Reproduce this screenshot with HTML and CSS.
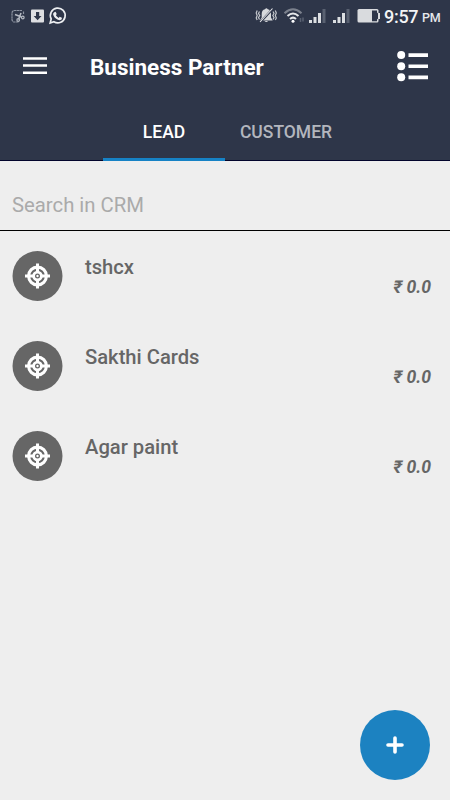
FILE: index.html
```
<!DOCTYPE html>
<html lang="en">
<head>
<meta charset="utf-8">
<title>Business Partner</title>
<link rel="stylesheet" href="styles.css">
</head>
<body>
<svg class="symbols" aria-hidden="true">
  <symbol id="target" viewBox="0 0 26 26">
    <circle cx="13" cy="13" r="8.900" fill="none" stroke="#fff" stroke-width="3.100"/>
    <path d="M13 .5v9M13 16.500v9M.5 13h9M16.500 13h9" stroke="#fff" stroke-width="3"/>
    <circle cx="13" cy="13" r="3.900" fill="none" stroke="#fff" stroke-width="2.800"/>
    <circle cx="13" cy="13" r="1.200" fill="#fff"/>
  </symbol>
</svg>
<header class="header">
  <div class="status">
    <svg class="status-left" width="80" height="32" viewBox="0 0 80 32">
      <path d="M22 10.500h-7.500a2.500 2.500 0 0 0-2.500 2.500v6.500a2.500 2.500 0 0 0 2.500 2.500h4M23.500 11.500v3" fill="none" stroke="#8d94a1" stroke-width="1.200" stroke-dasharray="2.500 .4"/>
      <path d="M15 14.500l6.500 2.500M21 13l-2.500 6.500" stroke="#b5bac3" stroke-width="1.600"/>
      <circle cx="22.800" cy="17.500" r="1.300" fill="none" stroke="#b5bac3" stroke-width="1.200"/>
      <circle cx="18.200" cy="20" r="1.300" fill="none" stroke="#b5bac3" stroke-width="1.200"/>
      <rect x="31" y="9.500" width="13" height="13" rx="1" fill="#dedfe2"/>
      <path d="M36 12h3.200v4h2.300l-3.900 4.200-3.900-4.200H36z" fill="#2e3649"/>
      <path d="M50.200 23l1-4.100a7.400 7.400 0 1 1 2.700 2.900z" fill="none" stroke="#eceef1" stroke-width="1.700"/>
      <path d="M54.300 12.200l1.300-.4 1.100 2.300-.8 1.200c.7 1.300 1.500 2 2.800 2.600l1-1.100 2.200 1-.1 1.200c-.7 1.300-2.300 1.400-3.900.7-2.300-1-4.100-3-4.700-5-.2-1 .2-2 1.100-2.500z" fill="#eceef1"/>
    </svg>
    <svg class="status-right" width="130" height="32" viewBox="250 0 130 32">
      <path d="M260 20.500l1.700-3v-3.500q0-4 3.300-4.800q1.400-1.800 2.800 0q3.200.8 3.200 4.800v3.500l1.700 3zM264.500 21h3.600q-1.800 2-3.600 0z" fill="#d8dadd"/>
      <path d="M260.500 22L272.500 9" stroke="#2e3649" stroke-width="2.200"/>
      <path d="M260 22L272.500 8.500" stroke="#e7e8eb" stroke-width="1.100"/>
      <path d="M259.500 11.500l-1 2 1.200 2-1.200 2 1 2M257.200 10.500l-1 2.500 1 2.500-1 2.500 1 2M273 11.500l1 2-1.200 2 1.200 2-1 2M275.300 10.500l1 2.500-1 2.500 1 2.500-1 2" fill="none" stroke="#c4c7cc" stroke-width="1.200"/>
      <path d="M284.500 13.200q8.500-7.800 17 0" fill="none" stroke="#7b818d" stroke-width="2"/>
      <path d="M287.500 16q5.500-5 11 0M290 19q3-2.700 6 0" fill="none" stroke="#e5e7ea" stroke-width="2"/>
      <circle cx="293" cy="21.200" r="1.500" fill="#fff"/>
      <path d="M300.500 18v4M303 17.500v4" stroke="#596171" stroke-width="1.500"/>
      <path d="M309 20h3v3h-3zM313.500 17h3v6h-3zM318 13h3v10h-3zM333 20h3v3h-3zM337.500 17h3v6h-3zM342 13h3v10h-3z" fill="#dcdfe2"/>
      <path d="M322.500 9h3v14h-3zM346.500 9h3v14h-3z" fill="#596171"/>
      <rect x="357.500" y="9" width="21" height="13.500" rx="1.500" fill="#d9dbde"/>
      <path d="M372 10.500h5v2l1.200 1v5l-1.200 1v1.700h-5z" fill="#2e3649"/>
      <path d="M379 13v6" stroke="#d9dbde" stroke-width="2"/>
    </svg>
    <span class="clock">9:57</span><span class="meridiem">PM</span>
  </div>
  <div class="toolbar">
    <svg class="menu" width="24" height="18" viewBox="0 0 24 18"><path d="M0 1.500h24M0 8.500h24M0 15.700h24" stroke="#fff" stroke-width="2.400"/></svg>
    <h1 class="title">Business Partner</h1>
    <svg class="list-icon" width="32" height="32" viewBox="0 0 32 32"><g fill="#fff"><circle cx="4.200" cy="5" r="4"/><circle cx="4.200" cy="16.200" r="4"/><circle cx="4.200" cy="27.300" r="4"/><path d="M11.500 3.200H31v3.700H11.500zM11.500 14.400H31v3.700H11.500zM11.500 25.500H31v3.700H11.500z"/></g></svg>
  </div>
  <nav class="tabs">
    <a class="tab active">LEAD</a>
    <a class="tab">CUSTOMER</a>
  </nav>
</header>
<div class="search"><span>Search in CRM</span></div>
<main class="list">
  <div class="row"><div class="avatar"><svg width="51" height="50" viewBox="0 0 51 50"><circle cx="25.500" cy="25" r="25" fill="#666"/><use href="#target" x="12.500" y="12" width="26" height="26"/></svg></div><div class="name">tshcx</div><div class="amount">₹ 0.0</div></div>
  <div class="row"><div class="avatar"><svg width="51" height="50" viewBox="0 0 51 50"><circle cx="25.500" cy="25" r="25" fill="#666"/><use href="#target" x="12.500" y="12" width="26" height="26"/></svg></div><div class="name">Sakthi Cards</div><div class="amount">₹ 0.0</div></div>
  <div class="row"><div class="avatar"><svg width="51" height="50" viewBox="0 0 51 50"><circle cx="25.500" cy="25" r="25" fill="#666"/><use href="#target" x="12.500" y="12" width="26" height="26"/></svg></div><div class="name">Agar paint</div><div class="amount">₹ 0.0</div></div>
</main>
<div class="fab"><svg width="18" height="18" viewBox="0 0 18 18"><path d="M9 2v14M2 9h14" stroke="#fff" stroke-width="3.600" stroke-linecap="round"/></svg></div>
</body>
</html>
```
FILE: styles.css
```
* { box-sizing: border-box; }
body {
  margin: 0;
  height: 800px;
  overflow: hidden;
  background: #eeeeee;
  font-family: Roboto, sans-serif;
}
.symbols { display: none; }
.header {
  height: 161px;
  background: #2e3649;
  border-bottom: 1px solid #02042c;
  color: #fff;
}
.status { display: flex; height: 32px; }
.status svg { display: block; }
.status-right { margin-left: 170px; }
.clock {
  margin-left: 4px;
  width: 38px;
  font-size: 18px;
  font-weight: 500;
  line-height: 33px;
  letter-spacing: -.3px;
  white-space: nowrap;
  color: #f3f4f5;
}
.meridiem {
  font-size: 12.500px;
  font-weight: 500;
  line-height: 36px;
  letter-spacing: -.2px;
  color: #e6e8eb;
}
.toolbar {
  display: flex;
  align-items: center;
  height: 70px;
  padding: 0 21px 0 23px;
}
.menu { margin-top: -3px; }
.title {
  margin: 0 auto 0 43px;
  font-size: 22.500px;
  font-weight: 700;
  line-height: 30px;
}
.list-icon { margin-top: -2px; }
.tabs { display: flex; height: 59px; padding-left: 103px; }
.tab {
  width: 122px;
  height: 59px;
  text-align: center;
  line-height: 60px;
  font-size: 17.500px;
  font-weight: 500;
  color: #b3b6be;
}
.active { color: #fff; border-bottom: 3px solid #1682c5; }
.search {
  height: 70px;
  padding: 29px 12px 0;
  border-bottom: 1px solid #000;
  font-size: 20.300px;
  line-height: 30px;
  color: #aaaaaa;
}
.row {
  display: flex;
  height: 90px;
  padding: 20px 19px 0 12px;
}
.avatar { width: 51px; height: 50px; }
.avatar svg { display: block; }
.name {
  flex: 1;
  margin-left: 22px;
  font-size: 20.200px;
  font-weight: 500;
  line-height: 32px;
  color: #666;
}
.amount {
  padding-top: 21px;
  font-size: 17.600px;
  font-weight: 700;
  font-style: italic;
  line-height: 30px;
  color: #666;
}
.fab {
  position: absolute;
  left: 360px;
  top: 710px;
  display: flex;
  align-items: center;
  justify-content: center;
  width: 70px;
  height: 70px;
  border-radius: 50%;
  background: #1c82c1;
}
```
